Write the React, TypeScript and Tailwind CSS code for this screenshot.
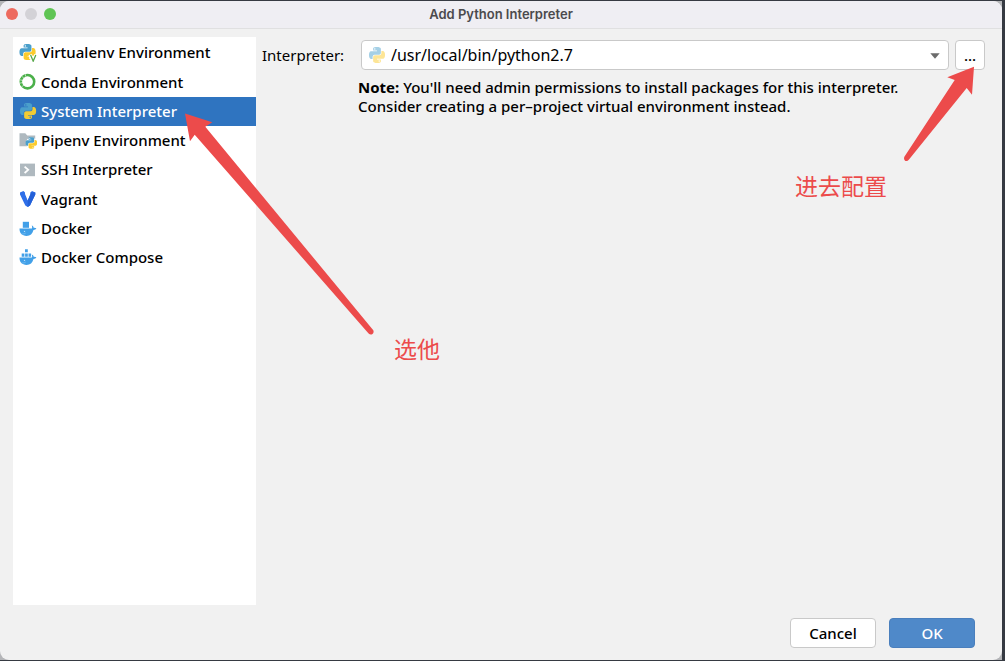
import type { ReactNode } from 'react';

const SNAKE =
  'M14.25.18l.9.2.73.26.59.3.45.32.34.34.25.34.16.33.1.3.04.26.02.2-.01.13V8.5l-.05.63-.13.55-.21.46-.26.38-.3.31-.33.25-.35.19-.35.14-.33.1-.3.07-.26.04-.21.02H8.77l-.69.05-.59.14-.5.22-.41.27-.33.32-.27.35-.2.36-.15.37-.1.35-.07.32-.04.27-.02.21v3.06H3.17l-.21-.03-.28-.07-.32-.12-.35-.18-.36-.26-.36-.36-.35-.46-.32-.59-.28-.73-.21-.88-.14-1.05-.05-1.23.06-1.22.16-1.04.24-.87.32-.71.36-.57.4-.44.42-.33.42-.24.4-.16.36-.1.32-.05.24-.01h.16l.06.01h8.16v-.83H6.18l-.01-2.75-.02-.37.05-.34.11-.31.17-.28.25-.26.31-.23.38-.2.44-.18.51-.15.58-.12.64-.1.71-.06.77-.04.84-.02 1.27.05zm-6.3 1.98l-.23.33-.08.41.08.41.23.34.33.22.41.09.41-.09.33-.22.23-.34.08-.41-.08-.41-.23-.33-.33-.22-.41-.09-.41.09z';

function Snakes({ blue = '#4a9fcb', yellow = '#fbcb2d' }: { blue?: string; yellow?: string }) {
  return (
    <>
      <path d={SNAKE} fill={blue} />
      <path d={SNAKE} fill={yellow} transform="rotate(180 12 12)" />
    </>
  );
}

function Icon({ children }: { children: ReactNode }) {
  return (
    <svg viewBox="0 0 18 18" className="size-[18px] shrink-0" aria-hidden="true">
      {children}
    </svg>
  );
}

function PythonIcon() {
  return (
    <Icon>
      <g transform="translate(1 1) scale(.67)">
        <Snakes yellow="#f2cc33" />
      </g>
    </Icon>
  );
}

function VirtualenvIcon() {
  return (
    <Icon>
      <g transform="translate(.5 0) scale(.67)">
        <Snakes />
      </g>
      <path d="M11.2 10.6l2.9 7.2 2.9-7.2" fill="none" stroke="#fff" strokeWidth="3.6" />
      <path d="M11.6 11l2.6 6.2L16.8 11" fill="none" stroke="#58a84a" strokeWidth="1.3" />
    </Icon>
  );
}

function CondaIcon() {
  return (
    <Icon>
      <circle cx="8.5" cy="8.7" r="6.7" fill="none" stroke="#4bb04a" strokeWidth="2.6" />
      <path
        d="M.8 10.2l3.4-.8M.8 6.8l3.4.7M2.8 3.3l2.4 2.2M6 .8l.8 2.6M2.6 13.8l2.4-1.8"
        stroke="#fff"
        strokeWidth=".6"
      />
    </Icon>
  );
}

function PipenvIcon() {
  return (
    <Icon>
      <path d="M.5 2.2h5.8l1.9 2.3h8v10.7H.5z" fill="#afb9bf" />
      <circle cx="12.4" cy="12" r="5.6" fill="#fff" />
      <g transform="translate(6.6 6.2) scale(.48)">
        <Snakes />
      </g>
    </Icon>
  );
}

function SshIcon() {
  return (
    <Icon>
      <rect x="1" y="2.6" width="15" height="12.6" fill="#afb9bf" />
      <path d="M5.6 5.6l3.6 3.2-3.6 3.2" fill="none" stroke="#fff" strokeWidth="1.8" />
    </Icon>
  );
}

function VagrantIcon() {
  return (
    <Icon>
      <path
        d="M1 2.4L4.4 1.1 6 2.6v1.5l2.7 6.3 2.8-6.3V2.6L13 1.1l3.3 1.3v2L11 15.6l-2.3 1.3-2.4-1.3L1 4.4z"
        fill="#2f6fe8"
      />
      <path d="M11.5 2.6L16.3 2.4v2L11 15.6l-2.3 1.3v-6.5l2.8-6.3z" fill="#2360d8" />
    </Icon>
  );
}

function Whale() {
  return (
    <>
      <path
        d="M.5 9.6h12.4c.4-.9.3-2-.2-3 1.2.4 1.8 1.2 2 2.1.8-.1 1.8 0 2.7.6-.5 1.1-1.6 1.6-2.9 1.6-1 3.9-3.3 6-6.9 6C3 16.9.5 14.4.5 9.6z"
        fill="#42a0e8"
      />
      <circle cx="5.5" cy="12.4" r=".7" fill="#b9def8" />
      <path d="M2.6 14.8c1.6.3 3 .1 4.2-.8" fill="none" stroke="#8ccaf5" strokeWidth=".6" />
    </>
  );
}

function DockerIcon() {
  return (
    <Icon>
      <rect x="3.8" y="2.8" width="6.2" height="6" fill="#42a0e8" />
      <Whale />
    </Icon>
  );
}

function ComposeIcon() {
  return (
    <Icon>
      <path d="M6 1.3h2.8v3H6zM2.7 5.6h2.7v3.2H2.7zM6.1 5.6h2.7v3.2H6.1zM9.5 5.6h2.6v3.2H9.5z" fill="#42a0e8" />
      <Whale />
    </Icon>
  );
}

const ENVIRONMENTS = [
  { label: 'Virtualenv Environment', icon: <VirtualenvIcon /> },
  { label: 'Conda Environment', icon: <CondaIcon /> },
  { label: 'System Interpreter', icon: <PythonIcon />, selected: true },
  { label: 'Pipenv Environment', icon: <PipenvIcon /> },
  { label: 'SSH Interpreter', icon: <SshIcon /> },
  { label: 'Vagrant', icon: <VagrantIcon /> },
  { label: 'Docker', icon: <DockerIcon /> },
  { label: 'Docker Compose', icon: <ComposeIcon /> },
];

function TitleBar() {
  return (
    <header className="grid h-7 shrink-0 grid-cols-[1fr_auto_1fr] items-center border-b border-[#e0e0e1] bg-[#efeef3] px-1.5 pb-0.5">
      <div className="flex gap-[7px]">
        <button type="button" aria-label="Close" className="size-3 rounded-full bg-[#ed6a5f]" />
        <button type="button" aria-label="Minimize" className="size-3 rounded-full bg-[#d3d2d7]" />
        <button type="button" aria-label="Zoom" className="size-3 rounded-full bg-[#5fc454]" />
      </div>
      <h1 className="font-['Inter',sans-serif] text-[13px] font-semibold leading-6 text-[#4b4a4d]">
        Add Python Interpreter
      </h1>
    </header>
  );
}

function Annotations() {
  return (
    <div className="pointer-events-none absolute inset-0 font-['Noto_Sans_CJK_SC',sans-serif] text-[23px] font-normal leading-8 text-[#ec4b4b]">
      <svg className="absolute left-[180px] top-[108px] h-[230px] w-[200px]" viewBox="180 108 200 230" aria-hidden="true">
        <path
          d="M185 113.6L212.3 122.3 205.3 126.7 373.3 330.3Q374.2 332.6 372.5 334Q370.5 335.3 368.6 333.5L194.7 134.7 190 141.3z"
          fill="#ec4b4b"
        />
      </svg>
      <svg className="absolute right-[25px] top-[62px] h-[104px] w-[80px]" viewBox="900 62 80 104" aria-hidden="true">
        <path
          d="M974 66.7L947.3 77.3 954.7 80 904.2 157Q903.4 159.5 905 160.7Q907.2 161.8 909 159.5L966.7 88 972 94.7z"
          fill="#ec4b4b"
        />
      </svg>
      <span className="absolute left-[394px] top-[332px]">选他</span>
      <span className="absolute right-[118px] top-[169px]">进去配置</span>
    </div>
  );
}

export default function App() {
  return (
    <div className="relative flex min-h-screen flex-col bg-[#363a42] pb-px pr-[3px] pt-px font-['Noto_Sans','Open_Sans',sans-serif] text-[15px] font-medium text-black">
      <div className="flex flex-1 flex-col bg-[#b4b5b8]">
        <div className="flex flex-1 flex-col overflow-hidden rounded-[9px] bg-[#f1f1f1]">
          <TitleBar />
          <main className="flex flex-1 pl-[13px] pr-[17px] pt-2">
            <nav aria-label="Environment type" className="w-[243px] shrink-0 bg-white pt-px">
              <ul className="flex h-[234px] flex-col">
                {ENVIRONMENTS.map(({ label, icon, selected }) => (
                  <li key={label} className="flex flex-1">
                    <button
                      type="button"
                      aria-current={selected}
                      className={
                        selected
                          ? 'flex w-full items-center gap-1 bg-[#2f74c0] pl-1.5 text-left text-white'
                          : 'flex w-full items-center gap-1 pl-1.5 text-left'
                      }
                    >
                      {icon}
                      {label}
                    </button>
                  </li>
                ))}
              </ul>
            </nav>
            <section className="min-w-0 flex-1 pl-1.5 pt-[3px]">
              <div className="flex items-center">
                <label htmlFor="interpreter" className="w-[99px] shrink-0 font-normal">
                  Interpreter:
                </label>
                <div className="relative min-w-0 flex-1">
                  <select
                    id="interpreter"
                    className="block h-[30px] w-full appearance-none rounded-[4px] border border-[#c9c9c9] bg-white pl-[29px] pr-8 text-base font-normal"
                  >
                    <option>/usr/local/bin/python2.7</option>
                  </select>
                  <svg viewBox="0 0 24 24" className="pointer-events-none absolute left-2 top-[7px] size-4" aria-hidden="true">
                    <Snakes blue="#a5d0e6" yellow="#fde596" />
                  </svg>
                  <svg viewBox="0 0 10 6" className="pointer-events-none absolute right-[9px] top-[13px] h-1.5 w-2.5" aria-hidden="true">
                    <path d="M.3.3h9.4L5 5.8z" fill="#6b6b6b" />
                  </svg>
                </div>
                <button
                  type="button"
                  aria-label="Browse interpreters"
                  className="ml-1.5 h-[30px] w-[30px] rounded-[4px] border border-[#c9c9c9] bg-white"
                >
                  ...
                </button>
              </div>
              <p className="ml-24 mt-2 leading-[19px]">
                <b>Note:</b> You'll need admin permissions to install packages for this interpreter.
                <br />
                Consider creating a per–project virtual environment instead.
              </p>
            </section>
          </main>
          <footer className="flex justify-end gap-[13px] pb-3 pr-[27px] pt-[13px]">
            <button type="button" className="h-[30px] w-[86px] rounded-[4px] border border-[#c9c9c9] bg-white">
              Cancel
            </button>
            <button type="button" className="h-[30px] w-[86px] rounded-[4px] border border-[#4a7fbd] bg-[#4f89c9] text-white">
              OK
            </button>
          </footer>
        </div>
      </div>
      <Annotations />
    </div>
  );
}
